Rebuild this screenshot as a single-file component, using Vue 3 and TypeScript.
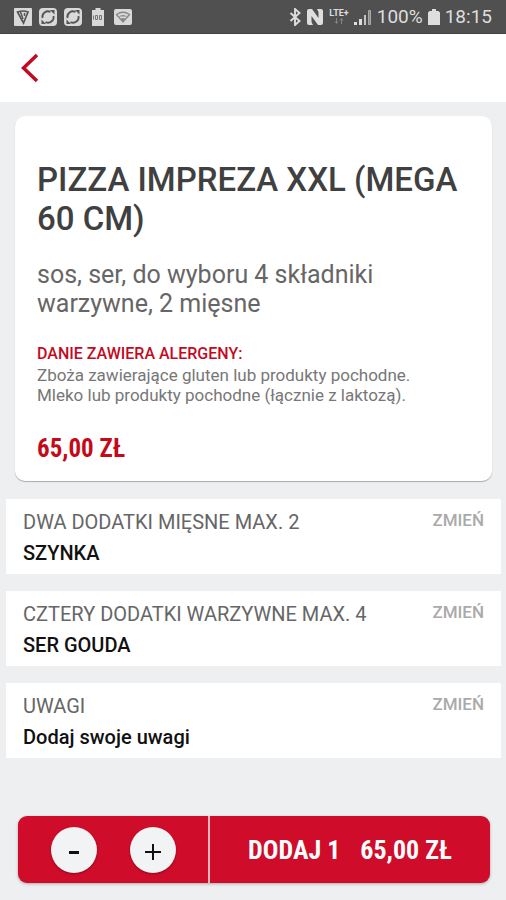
<script setup lang="ts">
import { computed, ref } from 'vue'

interface Option {
  id: string
  label: string
  value: string
}

const unitPrice = 65
const quantity = ref(1)

const options: Option[] = [
  { id: 'meat', label: 'DWA DODATKI MIĘSNE MAX. 2', value: 'SZYNKA' },
  { id: 'vegetables', label: 'CZTERY DODATKI WARZYWNE MAX. 4', value: 'SER GOUDA' },
  { id: 'notes', label: 'UWAGI', value: 'Dodaj swoje uwagi' },
]

const formatPrice = (value: number): string => `${value.toFixed(2).replace('.', ',')} ZŁ`
const total = computed(() => formatPrice(unitPrice * quantity.value))

function decrease(): void {
  if (quantity.value > 1) quantity.value--
}

function increase(): void {
  quantity.value++
}
</script>

<template>
  <div class="screen">
    <div class="status">
      <div class="status-left">
        <svg class="notice" viewBox="0 0 20 20" aria-hidden="true">
          <rect x="1" y="1" width="18" height="18" rx="1" fill="#d9d9d9" />
          <path d="M4.500 5 Q10 3 15 5 L10.500 16 Z" fill="none" stroke="#555" stroke-width="1.700" />
          <path d="M7.500 5l2.500 7M11.500 6v3" stroke="#555" stroke-width="1.500" />
        </svg>
        <svg v-for="n in 2" :key="n" class="notice" viewBox="0 0 20 20" aria-hidden="true">
          <rect x="1" y="1" width="18" height="18" rx="4" fill="#d9d9d9" />
          <path d="M4.500 11a5.500 5.500 0 0 1 8-6M15.500 9a5.500 5.500 0 0 1-8 6" fill="none" stroke="#555" stroke-width="1.800" />
          <path d="M12 3h4.500v4.500zM8 17H3.500v-4.500z" fill="#555" />
        </svg>
        <svg class="notice" viewBox="0 0 20 20" aria-hidden="true">
          <path d="M7.500 1h5v2H16v16H4V3h3.500z" fill="#d9d9d9" />
          <path d="M5.500 8.500v4M7.500 8.500h2v4h-2zM11.500 8.500h2v4h-2z" fill="none" stroke="#777" />
        </svg>
        <svg class="notice" viewBox="0 0 20 20" aria-hidden="true">
          <rect x="1" y="2" width="18" height="16" rx="2" fill="#d9d9d9" />
          <path d="M3.500 7.500Q10 3 16.500 7.500L10 15z" fill="none" stroke="#888" stroke-width="1.300" />
          <path d="M5.500 9.500Q10 6.500 14.500 9.500M7.500 12Q10 10 12.500 12L10 15z" fill="#888" />
        </svg>
      </div>
      <div class="status-right">
        <svg class="bluetooth" viewBox="0 0 12 18" aria-hidden="true">
          <path d="M1.500 5l9 8L6 17V1l4.500 4-9 8" fill="none" stroke="#dedede" stroke-width="1.900" />
        </svg>
        <svg class="nfc" viewBox="0 0 18 18" aria-hidden="true">
          <path d="M1 3Q1 1 3 1h3l6.500 9V4L11 1h4q2 0 2 2v12q0 2-2 2h-3L5.500 8v6L7 17H3q-2 0-2-2z" fill="#dedede" />
        </svg>
        <div class="network">
          <span class="lte">LTE+</span>
          <svg class="arrows" viewBox="0 0 10 6" aria-hidden="true">
            <path d="M2.500 0v5M1 3.500l1.500 2 1.500-2M7.500 6V1M6 2.500l1.500-2 1.500 2" fill="none" stroke="#858585" />
          </svg>
        </div>
        <svg class="signal" viewBox="0 0 18 18" aria-hidden="true">
          <path d="M0 14h3v3H0zM5 11h3v6H5z" fill="#dedede" />
          <path d="M10 7h2v10h-2z" fill="#c4c4c4" />
          <path d="M14.500 2.500h2v14h-2z" fill="#888" stroke="#aaa" />
        </svg>
        <span>100%</span>
        <svg class="battery" viewBox="0 0 12 18" aria-hidden="true">
          <path d="M4 1h4v2h2.500L12 4.500V17H0V4.500L1.500 3H4z" fill="#dedede" />
        </svg>
        <span>18:15</span>
      </div>
    </div>

    <header class="header">
      <button class="back" type="button" aria-label="Wstecz">
        <svg class="back-icon" viewBox="0 0 18 30" aria-hidden="true">
          <path d="M16 2L2.500 15 16 28" fill="none" stroke="#c40a23" stroke-width="3.500" />
        </svg>
      </button>
    </header>

    <main class="content">
      <article class="card">
        <h1 class="title">PIZZA IMPREZA XXL (MEGA 60 CM)</h1>
        <p class="description">sos, ser, do wyboru 4 składniki warzywne, 2 mięsne</p>
        <div class="allergens">
          <h2 class="allergens-title">DANIE ZAWIERA ALERGENY:</h2>
          <p>Zboża zawierające gluten lub produkty pochodne.</p>
          <p>Mleko lub produkty pochodne (łącznie z laktozą).</p>
        </div>
        <p class="price">{{ formatPrice(unitPrice) }}</p>
      </article>

      <div class="options">
        <section v-for="option in options" :key="option.id" class="option">
          <div class="option-text">
            <h2 :id="option.id" class="option-label">{{ option.label }}</h2>
            <p class="option-value">{{ option.value }}</p>
          </div>
          <button class="change" type="button" :aria-describedby="option.id">ZMIEŃ</button>
        </section>
      </div>
    </main>

    <footer class="order">
      <div class="stepper">
        <button class="step" type="button" aria-label="Mniej" @click="decrease">
          <svg class="step-icon" viewBox="0 0 20 20" aria-hidden="true">
            <path d="M5 12.500h10" stroke="#111" stroke-width="3" />
          </svg>
        </button>
        <button class="step" type="button" aria-label="Więcej" @click="increase">
          <svg class="step-icon" viewBox="0 0 20 20" aria-hidden="true">
            <path d="M2 12h16M10 4v16" stroke="#111" stroke-width="2" />
          </svg>
        </button>
      </div>
      <button class="add" type="button">
        <span>DODAJ {{ quantity }}</span>
        <span>{{ total }}</span>
      </button>
    </footer>
  </div>
</template>

<style>
body {
  margin: 0;
  background: #eeeff0;
}
</style>

<style scoped>
.screen {
  display: flex;
  flex-direction: column;
  min-height: 100vh;
  background: #eeeff0;
  color: #404040;
  font-family: Roboto, "Liberation Sans", sans-serif;
}

h1,
h2,
p {
  margin: 0;
}

button {
  padding: 0;
  border: 0;
  background: none;
  color: inherit;
  font: inherit;
  cursor: pointer;
}

svg {
  display: block;
}

.status {
  display: flex;
  box-sizing: border-box;
  align-items: center;
  justify-content: space-between;
  height: 34px;
  padding: 0 14px 0 13px;
  border-bottom: 1px solid #444;
  background: #505050;
  color: #dedede;
  font-size: 19px;
}

.status-left,
.status-right {
  display: flex;
  align-items: center;
  gap: 5px;
}

.notice {
  width: 20px;
  height: 20px;
}

.bluetooth,
.battery {
  width: 12px;
  height: 18px;
}

.nfc,
.signal {
  width: 18px;
  height: 18px;
}

.network {
  display: flex;
  flex-direction: column;
  align-items: center;
}

.lte {
  font-size: 9px;
  font-weight: 700;
  line-height: 9px;
}

.arrows {
  width: 10px;
  height: 6px;
}

.header {
  display: flex;
  align-items: center;
  height: 68px;
  padding: 0 14px;
  background: #fff;
}

.back {
  display: grid;
  place-items: center;
  width: 32px;
  height: 44px;
}

.back-icon {
  width: 18px;
  height: 30px;
}

.content {
  display: flex;
  flex: 1;
  flex-direction: column;
  gap: 18px;
  padding: 14px 5px 24px 6px;
}

.card {
  margin: 0 9px;
  padding: 44px 22px 17px;
  border-radius: 10px;
  background: #fff;
  box-shadow: 0 1px 1px #aaa;
}

.title {
  font-size: 33px;
  font-weight: 500;
  line-height: 39px;
}

.description {
  margin-top: 22px;
  color: #666;
  font-size: 25px;
  line-height: 29px;
}

.allergens {
  margin-top: 24px;
  color: #777;
  font-size: 17px;
  line-height: 20px;
}

.allergens-title {
  color: #c40a23;
  font-size: 16px;
  font-weight: 500;
  line-height: 23px;
}

.price {
  margin-top: 29px;
  color: #c40a19;
  font-family: "Roboto Condensed", Roboto, sans-serif;
  font-size: 25px;
  font-weight: 700;
  line-height: 30px;
}

.options {
  display: flex;
  flex-direction: column;
  gap: 17px;
}

.option {
  display: flex;
  align-items: flex-start;
  justify-content: space-between;
  padding: 10px 17px 8px;
  background: #fff;
}

.option-label {
  color: #666;
  font-size: 20px;
  font-weight: 400;
  line-height: 26px;
}

.option-value {
  margin-top: 5px;
  color: #111;
  font-size: 20px;
  font-weight: 500;
  line-height: 26px;
}

.change {
  color: #aaa;
  font-size: 17px;
  font-weight: 500;
  line-height: 22px;
}

.order {
  display: flex;
  height: 67px;
  margin: 0 16px 17px 18px;
  overflow: hidden;
  border-radius: 9px;
  background: #cf0c2a;
  box-shadow: 0 1px 3px #aaa;
}

.stepper {
  display: flex;
  flex: 19;
  align-items: center;
  justify-content: center;
  gap: 33px;
  border-right: 2px solid #f3b5bd;
}

.step {
  display: grid;
  place-items: center;
  width: 46px;
  height: 46px;
  border-radius: 50%;
  background: #f1f3f4;
  box-shadow: 0 1px 2px #8a0a1c;
}

.step-icon {
  width: 20px;
  height: 20px;
}

.add {
  display: flex;
  flex: 28;
  align-items: center;
  justify-content: center;
  gap: 20px;
  color: #fff;
  font-family: "Roboto Condensed", Roboto, sans-serif;
  font-size: 26px;
  font-weight: 700;
}
</style>
